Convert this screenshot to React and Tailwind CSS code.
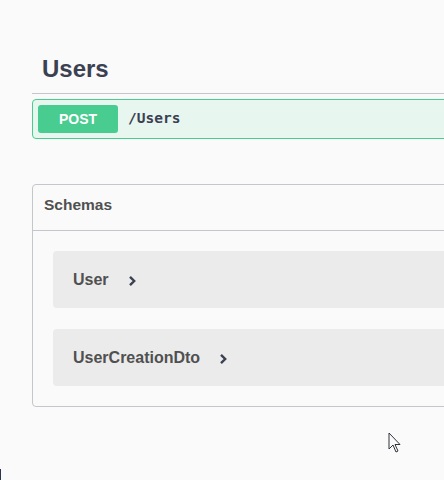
import React from 'react'

function Chevron() {
  return (
    <svg width="9" height="12" viewBox="0 0 9 12" className="ml-[19px] mt-[2px]">
      <path d="M2 1.8 L6.2 6 L2 10.2" fill="none" stroke="#3b4151" strokeWidth="2.4" />
    </svg>
  )
}

function ModelRow({ name, last }) {
  return (
    <div className={`flex items-center h-[57px] pl-[20px] rounded bg-[#ebebeb] ${last ? '' : 'mb-[21px]'}`}>
      <span className="text-[16px] font-bold text-[#505050]">{name}</span>
      <Chevron />
    </div>
  )
}

export default function App() {
  return (
    <div
      className="relative w-[444px] h-[480px] overflow-hidden bg-[#fafafa]"
      style={{ fontFamily: '"Liberation Sans", Arial, sans-serif' }}
    >
      <div className="pl-[32px] pt-[53px] w-[800px]">
        {/* tag header */}
        <div className="pl-[10px] pb-[8px] border-b border-[#c4c6cb]">
          <h3 className="text-[24px] leading-[32px] font-bold text-[#3b4151]">Users</h3>
        </div>

        {/* operation */}
        <div className="mt-[5px] border border-[#49cc90] rounded bg-[#e8f6f0] p-[5px] flex items-center">
          <span className="w-[80px] h-[28px] flex items-center justify-center rounded-[3px] bg-[#49cc90] text-white text-[14px] font-bold">
            POST
          </span>
          <span
            className="pl-[10px] text-[14.5px] font-bold text-[#3b4151]"
            style={{ fontFamily: '"DejaVu Sans Mono", "Liberation Mono", monospace' }}
          >
            /Users
          </span>
        </div>

        {/* schemas */}
        <div className="mt-[45px] border border-[#c4c6cb] rounded">
          <div className="h-[46px] flex items-center pl-[11px] pb-[6px] border-b border-[#c4c6cb]">
            <h4 className="text-[15.5px] font-bold text-[#505050]">Schemas</h4>
          </div>
          <div className="p-[20px]">
            <ModelRow name="User" />
            <ModelRow name="UserCreationDto" last />
          </div>
        </div>
      </div>

      {/* mouse pointer */}
      <svg className="absolute left-[388px] top-[432px]" width="14" height="22" viewBox="0 0 14 22">
        <path d="M1 1 L1 17 L5 13 L8 20 L10 19 L7 12.5 L12 12.5 Z" fill="#fafafa" stroke="#30333a" strokeWidth="1" strokeLinejoin="miter" />
      </svg>

      <div className="absolute left-0 top-[469px] w-[1px] h-[11px] bg-[#2d3350]" />
    </div>
  )
}
